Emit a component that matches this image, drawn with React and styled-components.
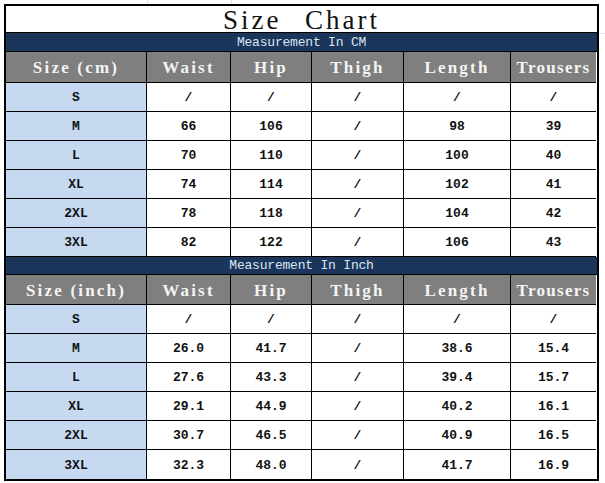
import React from "react";
import styled, { createGlobalStyle } from "styled-components";

const Global = createGlobalStyle`
  html, body { margin: 0; padding: 0; background: #ffffff; }
  body {
    font-family: "Liberation Mono", "DejaVu Sans Mono", monospace;
    background-image:
      linear-gradient(#e4e4e4, #e4e4e4),
      linear-gradient(#e4e4e4, #e4e4e4),
      linear-gradient(#e4e4e4, #e4e4e4);
    background-size: 1px 5px, 1px 5px, 6px 1px;
    background-position: 147px 0, 231px 0, 599px 33px;
    background-repeat: no-repeat;
  }
`;

const Page = styled.div`
  padding: 4px 0 0 4px;
  width: 605px;
  height: 483px;
  box-sizing: border-box;
`;

const Table = styled.div`
  width: 595px;
  box-sizing: border-box;
  border: 2px solid #000;
  display: flex;
  flex-direction: column;
  background: #fff;
`;

const Title = styled.div`
  height: 27px;
  display: flex;
  align-items: center;
  justify-content: center;
  font-family: "Liberation Serif", serif;
  font-size: 27px;
  letter-spacing: 3px;
  word-spacing: 14px;
  color: #111;
  white-space: pre;
  border-bottom: 1px solid #000;
  box-sizing: border-box;
  padding-top: 3px;
`;

const Band = styled.div`
  height: ${(p) => p.$h}px;
  background: #1b355b;
  color: #dce6f2;
  font-family: "Liberation Mono", monospace;
  font-size: 13px;
  display: flex;
  align-items: flex-end;
  justify-content: center;
  padding-bottom: 1px;
  box-sizing: border-box;
  border-bottom: 1px solid #000;
  letter-spacing: -0.2px;
`;

const Grid = styled.div`
  display: grid;
  grid-template-columns: 141px 84px 81px 92px 107px 85px;
`;

const Head = styled.div`
  height: ${(p) => p.$h}px;
  background: #7f7f7f;
  color: #f4f4f4;
  font-family: "Liberation Serif", serif;
  font-weight: bold;
  font-size: 17px;
  letter-spacing: ${(p) => (p.$last ? "1.3px" : "2.2px")};
  display: flex;
  align-items: center;
  justify-content: center;
  box-sizing: border-box;
  padding-top: 2px;
  border-bottom: 1px solid #000;
  border-right: ${(p) => (p.$last ? "none" : "1px solid #000")};
  white-space: pre;
`;

const Cell = styled.div`
  height: 29px;
  background: ${(p) => (p.$size ? "#c6d9f0" : "#ffffff")};
  color: #111;
  font-family: "Liberation Mono", monospace;
  font-weight: bold;
  font-size: 13px;
  display: flex;
  align-items: center;
  justify-content: center;
  box-sizing: border-box;
  padding-top: 1px;
  border-bottom: ${(p) => (p.$bottom ? "none" : "1px solid #000")};
  border-right: ${(p) => (p.$last ? "none" : "1px solid #000")};
`;

const cmRows = [
  ["S", "/", "/", "/", "/", "/"],
  ["M", "66", "106", "/", "98", "39"],
  ["L", "70", "110", "/", "100", "40"],
  ["XL", "74", "114", "/", "102", "41"],
  ["2XL", "78", "118", "/", "104", "42"],
  ["3XL", "82", "122", "/", "106", "43"],
];

const inchRows = [
  ["S", "/", "/", "/", "/", "/"],
  ["M", "26.0", "41.7", "/", "38.6", "15.4"],
  ["L", "27.6", "43.3", "/", "39.4", "15.7"],
  ["XL", "29.1", "44.9", "/", "40.2", "16.1"],
  ["2XL", "30.7", "46.5", "/", "40.9", "16.5"],
  ["3XL", "32.3", "48.0", "/", "41.7", "16.9"],
];

const cols = ["Waist", "Hip", "Thigh", "Length", "Trousers"];

function Section({ band, bandH, first, headH, rows, last }) {
  return (
    <>
      <Band $h={bandH}>{band}</Band>
      <Grid>
        {[first, ...cols].map((c, i) => (
          <Head key={c} $h={headH} $last={i === 5}>
            {c}
          </Head>
        ))}
        {rows.map((r, ri) =>
          r.map((v, ci) => (
            <Cell
              key={ri + "-" + ci}
              $size={ci === 0}
              $last={ci === 5}
              $bottom={last && ri === rows.length - 1}
            >
              {v}
            </Cell>
          ))
        )}
      </Grid>
    </>
  );
}

export default function App() {
  return (
    <Page>
      <Global />
      <Table>
        <Title>{"Size Chart"}</Title>
        <Section band="Measurement In CM" bandH={19} first="Size (cm)" headH={31} rows={cmRows} />
        <Section band="Measurement In Inch" bandH={18} first="Size (inch)" headH={30} rows={inchRows} last />
      </Table>
    </Page>
  );
}
